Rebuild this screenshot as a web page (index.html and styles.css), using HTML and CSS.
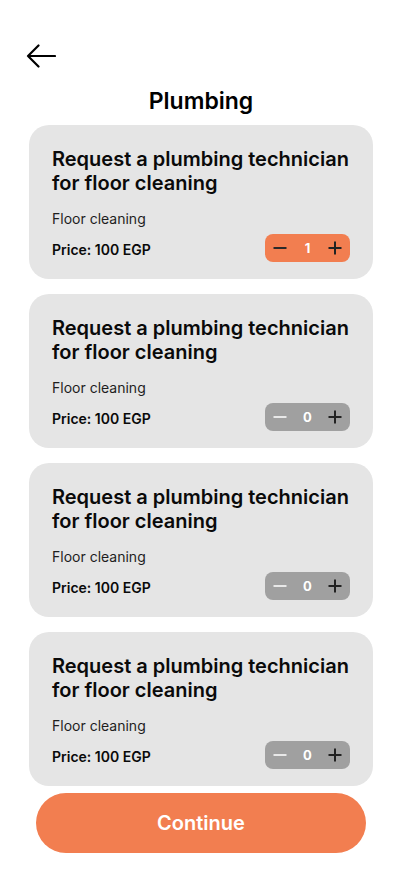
FILE: index.html
```html
<!DOCTYPE html>
<html lang="en">
<head>
<meta charset="utf-8">
<title>Plumbing</title>
<link rel="stylesheet" href="styles.css">
</head>
<body>
<div class="screen">
  <div class="back">
    <svg width="30" height="24" viewBox="0 0 30 24" fill="none" stroke="#000" stroke-width="2.2" stroke-linecap="round" stroke-linejoin="round">
      <path d="M29 12H2M12.5 1.5L2 12l10.5 10.5"/>
    </svg>
  </div>
  <h1 class="title">Plumbing</h1>
  <div class="list">
    <div class="card">
      <h2 class="card-title">Request a plumbing technician for floor cleaning</h2>
      <p class="card-sub">Floor cleaning</p>
      <div class="card-row">
        <span class="price">Price: 100 EGP</span>
        <div class="stepper active">
          <svg class="ico minus" width="14" height="14" viewBox="0 0 14 14"><path d="M0.5 7h13" stroke-width="2"/></svg>
          <span class="count">1</span>
          <svg class="ico plus" width="14" height="14" viewBox="0 0 14 14"><path d="M0.5 7h13M7 0.5v13" stroke-width="2"/></svg>
        </div>
      </div>
    </div>
    <div class="card">
      <h2 class="card-title">Request a plumbing technician for floor cleaning</h2>
      <p class="card-sub">Floor cleaning</p>
      <div class="card-row">
        <span class="price">Price: 100 EGP</span>
        <div class="stepper">
          <svg class="ico minus" width="14" height="14" viewBox="0 0 14 14"><path d="M0.5 7h13" stroke-width="2"/></svg>
          <span class="count">0</span>
          <svg class="ico plus" width="14" height="14" viewBox="0 0 14 14"><path d="M0.5 7h13M7 0.5v13" stroke-width="2"/></svg>
        </div>
      </div>
    </div>
    <div class="card">
      <h2 class="card-title">Request a plumbing technician for floor cleaning</h2>
      <p class="card-sub">Floor cleaning</p>
      <div class="card-row">
        <span class="price">Price: 100 EGP</span>
        <div class="stepper">
          <svg class="ico minus" width="14" height="14" viewBox="0 0 14 14"><path d="M0.5 7h13" stroke-width="2"/></svg>
          <span class="count">0</span>
          <svg class="ico plus" width="14" height="14" viewBox="0 0 14 14"><path d="M0.5 7h13M7 0.5v13" stroke-width="2"/></svg>
        </div>
      </div>
    </div>
    <div class="card">
      <h2 class="card-title">Request a plumbing technician for floor cleaning</h2>
      <p class="card-sub">Floor cleaning</p>
      <div class="card-row">
        <span class="price">Price: 100 EGP</span>
        <div class="stepper">
          <svg class="ico minus" width="14" height="14" viewBox="0 0 14 14"><path d="M0.5 7h13" stroke-width="2"/></svg>
          <span class="count">0</span>
          <svg class="ico plus" width="14" height="14" viewBox="0 0 14 14"><path d="M0.5 7h13M7 0.5v13" stroke-width="2"/></svg>
        </div>
      </div>
    </div>
  </div>
  <button class="continue">Continue</button>
</div>
</body>
</html>
```
FILE: styles.css
```css
* { box-sizing: border-box; }
html, body {
  margin: 0;
  padding: 0;
  background: #fff;
  font-family: Inter, "Noto Sans", "Liberation Sans", sans-serif;
  color: #000;
}
.screen {
  width: 402px;
  height: 874px;
  padding: 44px 29px 0;
  display: flex;
  flex-direction: column;
}
.back {
  height: 24px;
  margin-left: -3px;
  display: flex;
}
.title {
  margin: 19px 0 0;
  font-size: 23px;
  line-height: 28px;
  font-weight: 600;
  text-align: center;
}
.list {
  margin-top: 10px;
  display: flex;
  flex-direction: column;
  gap: 15px;
}
.card {
  background: #e5e5e5;
  border-radius: 20px;
  padding: 22px 23px 17px;
  height: 154px;
}
.card-title {
  margin: 0;
  font-size: 20px;
  line-height: 24px;
  font-weight: 600;
  color: #0a0a0a;
}
.card-sub {
  margin: 15px 0 0;
  font-size: 14px;
  line-height: 17px;
  color: #1e1e1e;
}
.card-row {
  margin-top: 7px;
  height: 28px;
  display: flex;
  align-items: center;
  justify-content: space-between;
}
.price {
  font-size: 14px;
  font-weight: 600;
  color: #0a0a0a;
  padding-top: 2px;
}
.stepper {
  width: 85px;
  height: 28px;
  border-radius: 8px;
  background: #a0a0a0;
  padding: 0 8px;
  display: flex;
  align-items: center;
  justify-content: space-between;
}
.stepper.active { background: #f27e50; }
.ico { display: block; fill: none; }
.minus { stroke: #e8e8e8; }
.plus { stroke: #222; }
.stepper.active .minus { stroke: #2a2a2a; }
.count {
  font-size: 13px;
  font-weight: 700;
  color: #fff;
}
.continue {
  margin: 7px 7px 0;
  height: 60px;
  border: none;
  border-radius: 30px;
  background: #f27e50;
  color: #fff;
  font-family: inherit;
  font-size: 20px;
  font-weight: 600;
}
```
